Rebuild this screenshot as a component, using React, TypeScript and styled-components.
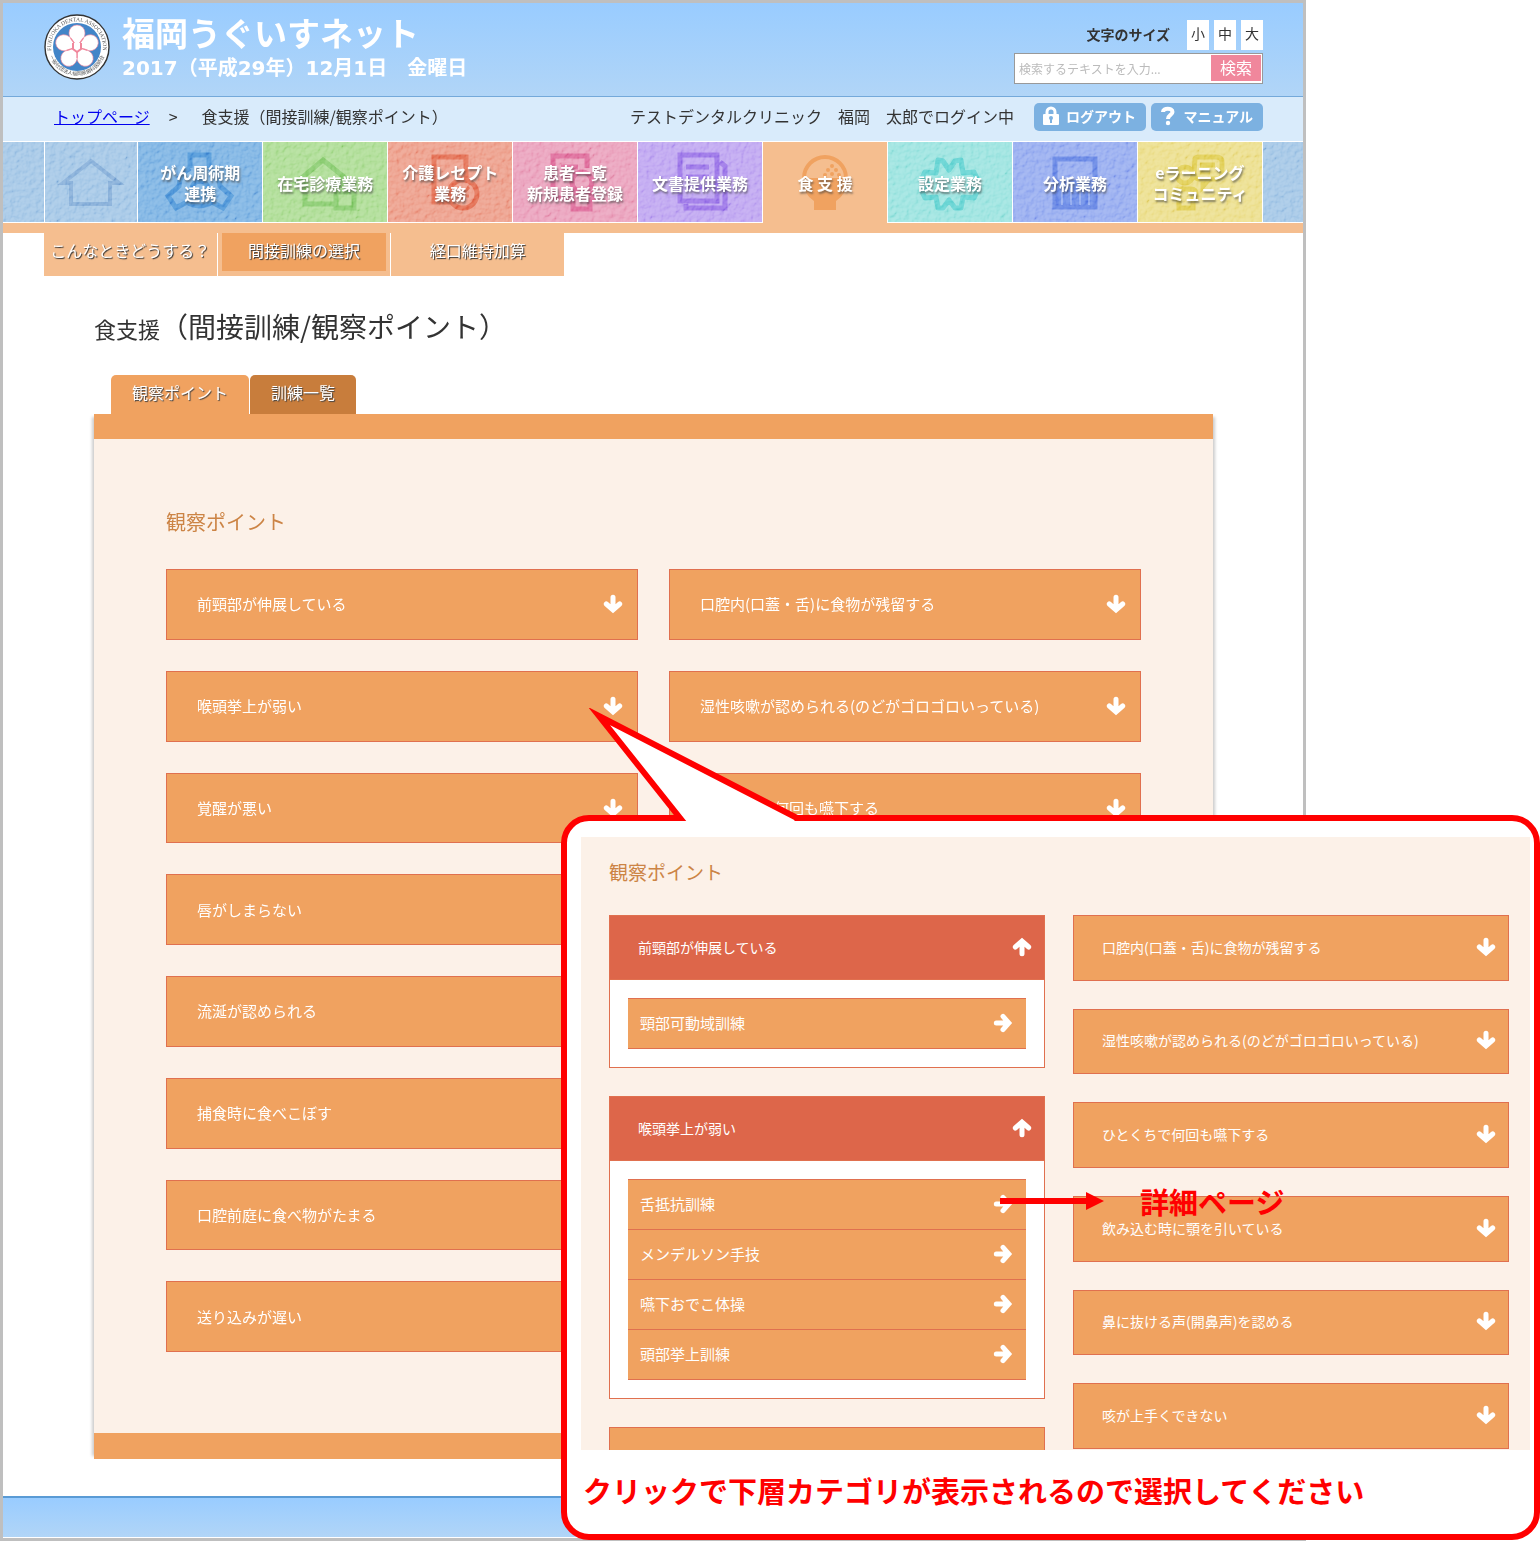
import React, { useState } from 'react';
import styled, { createGlobalStyle, css } from 'styled-components';

const color = {
  orange: '#f0a260',
  orangeLight: '#f5be8f',
  orangeDark: '#c87d3c',
  cream: '#fcf1e8',
  line: '#e0704f',
  open: '#dd664a',
  red: '#ff0000',
  ink: '#333333',
};

const GlobalStyle = createGlobalStyle`
  *, *::before, *::after { box-sizing: border-box; }
  body {
    margin: 0;
    background: #fff;
    color: ${color.ink};
    font-family: 'Noto Sans CJK JP', 'Noto Sans', sans-serif;
    font-size: 16px;
    line-height: 24px;
  }
  button, input { font: inherit; color: inherit; margin: 0; }
  ul { list-style: none; margin: 0; padding: 0; }
  h1, h2, h3, p { margin: 0; font-weight: 400; }
`;

/* ---------- frame ---------- */

const Canvas = styled.div`
  position: relative;
  padding-right: 234px;
`;

const Page = styled.div`
  border: 3px solid #bfbfbf;
  background: #fff;
`;

const Header = styled.header`
  display: flex;
  justify-content: space-between;
  height: 94px;
  padding: 10px 40px 0 41px;
  background: linear-gradient(#99ccff, #b1d5f7);
  border-bottom: 1px solid #74a9da;
`;

const Brand = styled.div`
  display: flex;
  gap: 12px;
  color: #fff;
`;

const LogoSvg = styled.svg`
  width: 66px;
  height: 66px;
  margin-top: 1px;
`;

const SiteName = styled.h1`
  font-size: 33px;
  line-height: 38px;
  font-weight: 700;
`;

const Today = styled.p`
  padding-top: 2px;
  font-family: 'DejaVu Sans', 'Noto Sans CJK JP', sans-serif;
  font-size: 20px;
  line-height: 30px;
  font-weight: 700;
`;

const Tools = styled.div`
  display: flex;
  flex-direction: column;
  align-items: flex-end;
  gap: 3px;
  padding-top: 7px;
`;

const SizePicker = styled.div`
  display: flex;
  align-items: center;
  gap: 5px;
`;

const SizeLabel = styled.span`
  margin-right: 12px;
  padding-bottom: 3px;
  font-size: 14px;
  font-weight: 700;
`;

const SizeButton = styled.button`
  width: 22px;
  height: 30px;
  padding: 0 0 4px;
  border: 0;
  background: #fff;
  font-size: 14px;
  line-height: 26px;
  cursor: pointer;
`;

const SearchForm = styled.form`
  display: flex;
  width: 249px;
  height: 31px;
  padding: 1px;
  border: 1px solid #999;
  background: #fff;
`;

const SearchInput = styled.input`
  flex: 1;
  min-width: 0;
  padding: 0 3px;
  border: 0;
  outline: 0;
  background: transparent;
  font-size: 12px;
  &::placeholder { color: #bbb; opacity: 1; }
`;

const SearchButton = styled.button`
  width: 50px;
  height: 26px;
  padding: 0 0 3px;
  border: 0;
  background: #f0879c;
  color: #fff;
  line-height: 22px;
  cursor: pointer;
`;

const InfoBar = styled.div`
  display: flex;
  align-items: center;
  height: 44px;
  padding: 0 40px 4px 51px;
  background: #d9ebfb;
`;

const Crumbs = styled.nav`
  display: flex;
  gap: 19px;
  padding-bottom: 2px;
  a { color: #0000ee; }
  span:last-child { margin-left: 5px; }
`;

const LoginName = styled.span`
  margin: 0 20px 0 auto;
  padding-bottom: 2px;
`;

const InfoActions = styled.div`
  display: flex;
  gap: 5px;
`;

const InfoButton = styled.button`
  display: flex;
  align-items: center;
  justify-content: space-between;
  width: 112px;
  height: 28px;
  padding: 0 10px 2px 8px;
  border: 0;
  border-radius: 5px;
  background: #7cb1e1;
  color: #fff;
  font-size: 14px;
  font-weight: 700;
  line-height: 24px;
  cursor: pointer;
  svg { width: 18px; height: 20px; }
`;

/* ---------- main navigation ---------- */

const NavBar = styled.nav`
  position: relative;
  display: flex;
  height: 82px;
  border-top: 1px solid #fff;
`;

const Grain = styled.svg`
  position: absolute;
  inset: 0;
  width: 100%;
  height: 80px;
  mix-blend-mode: soft-light;
  opacity: 0.6;
  pointer-events: none;
`;

const NavEdge = styled.span`
  flex: 0 0 41px;
  height: 80px;
  background: #a0c4e5;
  a + & { border-left: 1px solid #fff; }
`;

const NavTile = styled.a<{ $bg: string; $active?: boolean; $narrow?: boolean }>`
  position: relative;
  z-index: ${(p) => (p.$active ? 1 : 'auto')};
  flex: ${(p) => (p.$narrow ? '93 1 0' : '125 1 0')};
  display: flex;
  align-items: center;
  justify-content: center;
  height: ${(p) => (p.$active ? 81 : 80)}px;
  padding-top: 2px;
  border-left: 1px solid #fff;
  background: ${(p) => p.$bg};
  color: #fff;
  font-size: 16px;
  line-height: 21px;
  font-weight: 700;
  text-align: center;
  text-decoration: none;
  white-space: pre-line;
  text-shadow: 1px 2px 2px rgba(60, 60, 60, 0.6);
`;

const TileArt = styled.svg`
  position: absolute;
  top: 0;
  left: 50%;
  width: 125px;
  height: 80px;
  margin-left: -63px;
  fill: none;
  stroke-width: 5;
`;

const TileLabel = styled.span`
  position: relative;
  z-index: 2;
`;

const SubNav = styled.div`
  border-top: 10px solid ${color.orangeLight};
  padding-left: 41px;
`;

const SubList = styled.ul`
  display: flex;
  width: 520px;
`;

const SubItem = styled.li<{ $current?: boolean }>`
  flex: 1;
  height: 43px;
  padding: 0 4px 5px;
  background: ${color.orangeLight};
  & + & { border-left: 1px solid #fff; }
  a {
    display: block;
    height: 38px;
    margin: 0 -4px;
    color: #fff;
    line-height: 34px;
    text-align: center;
    text-decoration: none;
    text-shadow: 1px 1px 1px #333;
    ${(p) => p.$current && css`margin: 0; background: ${color.orange};`}
  }
`;

/* ---------- content ---------- */

const Content = styled.main`
  padding: 30px 90px 37px 91px;
`;

const PageTitle = styled.h2`
  font-size: 28px;
  line-height: 40px;
  small { font-size: 22px; }
`;

const Tabs = styled.div`
  display: flex;
  gap: 1px;
  padding: 27px 16px 0 17px;
`;

const Tab = styled.button<{ $current?: boolean }>`
  height: 39px;
  padding: 0 21px 5px;
  border: 0;
  border-radius: 5px 5px 0 0;
  background: ${(p) => (p.$current ? color.orange : color.orangeDark)};
  color: #fff;
  line-height: 34px;
  text-shadow: 1px 1px 1px #444;
  cursor: pointer;
`;

const Panel = styled.section`
  padding: 68px 72px 81px;
  border-top: 25px solid ${color.orange};
  border-bottom: 26px solid ${color.orange};
  background: ${color.cream};
  box-shadow: 5px 0 3px -3px #ccc, -5px 0 3px -3px #ccc;
`;

const SectionTitle = styled.h3<{ $small?: boolean }>`
  color: #cc8445;
  font-size: ${(p) => (p.$small ? 19 : 20)}px;
  line-height: 30px;
`;

const PointGrid = styled.ul`
  display: grid;
  grid-template-columns: 1fr 1fr;
  grid-template-rows: repeat(8, 1fr);
  gap: 31px;
  min-height: 783px;
  margin-top: 32px;
`;

const PointCell = styled.li<{ $column: number }>`
  display: grid;
  grid-column: ${(p) => p.$column};
`;

const PointButton = styled.button<{ $compact?: boolean; $open?: boolean }>`
  display: flex;
  align-items: center;
  justify-content: space-between;
  width: 100%;
  min-height: ${(p) => (p.$compact ? 65 : 70)}px;
  padding: ${(p) => (p.$compact ? '0 12px 2px 28px' : '0 14px 0 30px')};
  border: 1px solid ${color.line};
  background: ${(p) => (p.$open ? color.open : color.orange)};
  color: #fff;
  font-size: ${(p) => (p.$compact ? 14 : 15)}px;
  text-align: left;
  cursor: pointer;
`;

const ArrowSvg = styled.svg<{ $turn: number }>`
  flex: none;
  width: 20px;
  height: 20px;
  fill: none;
  stroke: #fff;
  stroke-width: 6;
  stroke-linecap: round;
  transform: rotate(${(p) => p.$turn}deg);
`;

const Footer = styled.footer`
  height: 41px;
  margin-bottom: 1px;
  border-top: 2px solid #5a9bd5;
  background: linear-gradient(#99ccff, #b1d5f7);
`;

/* ---------- callout over the page ---------- */

const Callout = styled.aside`
  position: absolute;
  top: 815px;
  right: 0;
  bottom: 1px;
  left: 561px;
  display: flex;
  flex-direction: column;
  padding: 16px 4px 0 14px;
  border: 6px solid ${color.red};
  border-radius: 28px;
  background: #fff;
`;

const Tail = styled.svg`
  position: absolute;
  top: -113px;
  left: 20px;
  width: 220px;
  height: 120px;
`;

const Inset = styled.div`
  position: relative;
  flex: 1;
  min-height: 0;
  overflow: hidden;
  padding: 20px 21px 0 28px;
  background: ${color.cream};
`;

const InsetColumns = styled.div`
  display: grid;
  grid-template-columns: 1fr 1fr;
  align-items: start;
  gap: 28px;
  margin-top: 28px;
`;

const OpenList = styled.ul`
  display: grid;
  gap: 28px;
`;

const ClosedList = styled.ul`
  display: grid;
  grid-auto-rows: 1fr;
  gap: 28px;
  min-height: 534px;
  li { display: grid; }
`;

const SubPoints = styled.ul`
  padding: 18px;
  border: 1px solid ${color.line};
  border-top: 0;
  background: #fff;
  li:first-child { border-top: 1px solid ${color.line}; }
`;

const SubPoint = styled.a`
  display: flex;
  align-items: center;
  justify-content: space-between;
  height: 50px;
  padding: 0 13px 2px 12px;
  border-bottom: 1px solid ${color.line};
  background: ${color.orange};
  color: #fff;
  font-size: 15px;
  text-decoration: none;
`;

const Note = styled.p`
  padding: 20px 0 24px 2px;
  color: ${color.red};
  font-size: 29px;
  line-height: 40px;
  font-weight: 700;
`;

const Pointer = styled.div`
  position: absolute;
  top: 344px;
  left: 419px;
  display: flex;
  align-items: center;
  gap: 36px;
  color: ${color.red};
  font-size: 29px;
  line-height: 40px;
  font-weight: 700;
  pointer-events: none;
  svg { width: 104px; height: 20px; }
`;

/* ---------- drawings ---------- */

const petals = [0, 72, 144, 216, 288];

const Logo = () => (
  <LogoSvg viewBox="0 0 66 66" aria-hidden="true">
    <defs>
      <path id="ringTop" d="M8.5 42 A26 26 0 1 1 57.5 42" />
      <path id="ringBottom" d="M5 40 A29 29 0 0 0 61 40" />
    </defs>
    <circle cx="33" cy="33" r="32" fill="#fff" stroke="#333" strokeWidth="1.4" />
    <circle cx="33" cy="33" r="24" fill="#4285c8" />
    <g fill="#555" fontFamily="Liberation Serif, serif" fontSize="5.6">
      <text><textPath href="#ringTop" startOffset="50%" textAnchor="middle">FUKUOKA DENTAL ASSOCIATION</textPath></text>
      <text fontFamily="Noto Sans CJK JP, sans-serif" fontSize="5">
        <textPath href="#ringBottom" startOffset="50%" textAnchor="middle">一般社団法人福岡県歯科医師会</textPath>
      </text>
    </g>
    <circle cx="33" cy="33" r="10" fill="#f0879c" />
    {petals.map((a) => (
      <path
        key={a}
        d="M33 31 C29 29 25 24 25 19 A8 8 0 0 1 41 19 C41 24 37 29 33 31 Z"
        fill="#fff"
        stroke="#f0879c"
        strokeWidth="0.6"
        transform={`rotate(${a} 33 33)`}
      />
    ))}
    {petals.map((a) => (
      <path key={a} d="M33 33 L33 22" stroke="#f0879c" strokeWidth="1.2" transform={`rotate(${a + 36} 33 33)`} />
    ))}
    <path d="M29 29 V35 L33 38 L37 35 V29" fill="#fff" stroke="#f0879c" strokeWidth="2" />
  </LogoSvg>
);

const Lock = () => (
  <svg viewBox="0 0 18 20" aria-hidden="true">
    <path d="M5 9 V6 a4 4 0 0 1 8 0 V9" fill="none" stroke="#fff" strokeWidth="3" />
    <rect x="1" y="8" width="16" height="11" rx="1" fill="#fff" />
    <circle cx="9" cy="12" r="2" fill="#7cb1e1" />
    <path d="M9 13 V17" stroke="#7cb1e1" strokeWidth="2" />
  </svg>
);

const Question = () => (
  <svg viewBox="0 0 18 20" aria-hidden="true">
    <path d="M4 6 C4 1.5 13.5 1.5 13.5 6 C13.5 9 9 9 9 13" fill="none" stroke="#fff" strokeWidth="4" />
    <circle cx="9" cy="17" r="2.2" fill="#fff" />
  </svg>
);

const Arrow = ({ turn = 0 }: { turn?: number }) => (
  <ArrowSvg $turn={turn} viewBox="0 0 24 24" aria-hidden="true">
    <path d="M12 4 V17 M4 12 L12 19 L20 12" />
  </ArrowSvg>
);

const art: Record<string, React.ReactNode> = {
  home: <path d="M45 41 H35 L63 19 L91 41 H82 V62 H43 V41" strokeWidth="4" />,
  cancer: (
    <path d="M53 26 V13 H72 V26 M72 26 A22 22 0 0 1 83 44 L94 54 L86 66 L75 60 A22 22 0 0 1 50 60 L39 66 L31 54 L42 44 A22 22 0 0 1 53 26 M55 47 a8 8 0 1 0 16 0 a8 8 0 1 0 -16 0" />
  ),
  visit: <path d="M43 39 H36 L61 18 L87 39 H80 V46 M43 39 V62 H72 M74 50 H92 V66 H74 Z" />,
  care: (
    <>
      <path d="M64 60 H47 V15 H79 V38" />
      <circle cx="76" cy="52" r="14" />
      <path d="M70 45 L76 52 L82 45 M76 52 V60 M70 54 H82" strokeWidth="3" />
    </>
  ),
  patient: (
    <>
      <path d="M56 56 H41 V14 H75 V26 M49 25 H66 M49 34 H58" />
      <circle cx="70" cy="40" r="10" />
      <path d="M58 56 Q58 51 64 51 H76 Q82 51 82 56 L78 58 V67 H61 V58 Z" />
    </>
  ),
  document: (
    <path d="M43 13 H80 V59 H43 Z M83 20 L88 24 V66 H49 V62 M49 25 H72 M49 35 H72 M49 45 H72" />
  ),
  food: (
    <g fill="#f0a260" stroke="none">
      <path d="M42 44 V36 A20 20 0 0 1 84 36 V44" fill="none" stroke="#f0a260" strokeWidth="4" />
      <path d="M40 36 H86 Q85 52 74 59 V68 H52 V59 Q41 52 40 36 Z" />
      <circle cx="70" cy="24" r="2" /><circle cx="66" cy="28" r="2" />
      <circle cx="74" cy="28" r="2" /><circle cx="70" cy="32" r="2" />
      <circle cx="63" cy="33" r="2" /><circle cx="77" cy="33" r="2" />
    </g>
  ),
  settings: (
    <path
      d="M51 18 L56 19 L62 28 L68 19 L74 18 L76 31 L87 30 L90 36 L82 43 L90 50 L87 56 L76 55 L74 66 L68 66 L62 58 L56 66 L51 66 L49 55 L38 56 L35 50 L43 43 L35 36 L38 30 L49 31 Z"
      strokeLinejoin="round"
    />
  ),
  analysis: (
    <>
      <path d="M43 38 H85 V67 H43 Z" fill="#6687e6" stroke="none" />
      <path d="M43 17 H83 V65 H43 Z" />
      <path d="M50 46 V63 M59 46 V63 M68 46 V63 M77 46 V63" stroke="#8fa8ee" strokeWidth="2" />
    </>
  ),
  learning: (
    <>
      <path d="M58 17 Q58 15 63 15 H79 Q85 15 85 20 V31 Q85 37 79 37 H72 L66 44 V37 H63 Q57 37 57 31 Z M63 23 H78 M63 30 H73" />
      <circle cx="48" cy="33" r="8" />
      <path d="M38 52 Q38 47 44 47 H54 Q59 47 59 52 V56 H56 V66 H42 V56 H38 Z" />
    </>
  ),
};

/* ---------- data ---------- */

const tiles = [
  { art: 'home', label: '', bg: '#a0c4e5', ink: '#7fa9d6' },
  { art: 'cancer', label: 'がん周術期\n連携', bg: '#79b0e2', ink: '#4991d6' },
  { art: 'visit', label: '在宅診療業務', bg: '#aadb91', ink: '#84c96a' },
  { art: 'care', label: '介護レセプト\n業務', bg: '#ec9b87', ink: '#e2694d' },
  { art: 'patient', label: '患者一覧\n新規患者登録', bg: '#e99db9', ink: '#dc6494' },
  { art: 'document', label: '文書提供業務', bg: '#bca2f0', ink: '#956ee6' },
  { art: 'food', label: '食 支 援', bg: color.orangeLight, ink: color.orange, active: true },
  { art: 'settings', label: '設定業務', bg: '#98e2de', ink: '#5dd0cf' },
  { art: 'analysis', label: '分析業務', bg: '#93a9ef', ink: '#6080e3' },
  { art: 'learning', label: 'eラーニング\nコミュニティ', bg: '#ebdd89', ink: '#dfcb4e' },
];

const leftPoints = [
  '前頸部が伸展している',
  '喉頭挙上が弱い',
  '覚醒が悪い',
  '唇がしまらない',
  '流涎が認められる',
  '捕食時に食べこぼす',
  '口腔前庭に食べ物がたまる',
  '送り込みが遅い',
];

const rightPoints = [
  '口腔内(口蓋・舌)に食物が残留する',
  '湿性咳嗽が認められる(のどがゴロゴロいっている)',
  'ひとくちで何回も嚥下する',
  '飲み込む時に顎を引いている',
  '鼻に抜ける声(開鼻声)を認める',
  '咳が上手くできない',
];

const groups = [
  { title: leftPoints[0], items: ['頸部可動域訓練'] },
  { title: leftPoints[1], items: ['舌抵抗訓練', 'メンデルソン手技', '嚥下おでこ体操', '頭部挙上訓練'] },
];

const pageRightPoints = rightPoints.slice(0, 3);

function Group({ title, items }: { title: string; items: string[] }) {
  const [open, setOpen] = useState(true);
  return (
    <li>
      <PointButton $compact $open={open} aria-expanded={open} onClick={() => setOpen(!open)}>
        {title}
        <Arrow turn={open ? 180 : 0} />
      </PointButton>
      {open && (
        <SubPoints>
          {items.map((item) => (
            <li key={item}>
              <SubPoint href="#detail">
                {item}
                <Arrow turn={-90} />
              </SubPoint>
            </li>
          ))}
        </SubPoints>
      )}
    </li>
  );
}

export default function App() {
  return (
    <Canvas>
      <GlobalStyle />
      <Page>
        <Header>
          <Brand>
            <Logo />
            <div>
              <SiteName>福岡うぐいすネット</SiteName>
              <Today>2017（平成29年）12月1日　金曜日</Today>
            </div>
          </Brand>
          <Tools>
            <SizePicker>
              <SizeLabel>文字のサイズ</SizeLabel>
              <SizeButton>小</SizeButton>
              <SizeButton>中</SizeButton>
              <SizeButton>大</SizeButton>
            </SizePicker>
            <SearchForm role="search" onSubmit={(e) => e.preventDefault()}>
              <SearchInput aria-label="検索" placeholder="検索するテキストを入力..." />
              <SearchButton>検索</SearchButton>
            </SearchForm>
          </Tools>
        </Header>

        <InfoBar>
          <Crumbs>
            <a href="#top">トップページ</a>
            <span>&gt;</span>
            <span>食支援（間接訓練/観察ポイント）</span>
          </Crumbs>
          <LoginName>テストデンタルクリニック　福岡　太郎でログイン中</LoginName>
          <InfoActions>
            <InfoButton><Lock />ログアウト</InfoButton>
            <InfoButton><Question />マニュアル</InfoButton>
          </InfoActions>
        </InfoBar>

        <NavBar>
          <NavEdge />
          {tiles.map((t) => (
            <NavTile
              key={t.art}
              href={`#${t.art}`}
              aria-label={t.label ? undefined : 'トップページ'}
              $bg={t.bg}
              $active={t.active}
              $narrow={t.art === 'home'}
            >
              <TileArt viewBox="0 0 125 80" stroke={t.ink} aria-hidden="true">{art[t.art]}</TileArt>
              {t.label && <TileLabel>{t.label}</TileLabel>}
            </NavTile>
          ))}
          <NavEdge />
          <Grain aria-hidden="true">
            <filter id="paper" x="0" y="0" width="100%" height="100%">
              <feTurbulence type="fractalNoise" baseFrequency="0.2" numOctaves="3" seed="4" />
              <feDiffuseLighting lightingColor="#fff" surfaceScale="2.5" diffuseConstant="0.75">
                <feDistantLight azimuth="225" elevation="45" />
              </feDiffuseLighting>
            </filter>
            <rect width="100%" height="100%" filter="url(#paper)" />
          </Grain>
        </NavBar>

        <SubNav>
          <SubList>
            <SubItem><a href="#help">こんなときどうする？</a></SubItem>
            <SubItem $current><a href="#training">間接訓練の選択</a></SubItem>
            <SubItem><a href="#oral">経口維持加算</a></SubItem>
          </SubList>
        </SubNav>

        <Content>
          <PageTitle><small>食支援</small>（間接訓練/観察ポイント）</PageTitle>
          <Tabs role="tablist">
            <Tab role="tab" aria-selected="true" $current>観察ポイント</Tab>
            <Tab role="tab" aria-selected="false">訓練一覧</Tab>
          </Tabs>
          <Panel>
            <SectionTitle>観察ポイント</SectionTitle>
            <PointGrid>
              {leftPoints.map((left, i) => (
                <React.Fragment key={left}>
                  <PointCell $column={1}>
                    <PointButton>{left}<Arrow /></PointButton>
                  </PointCell>
                  {pageRightPoints[i] && (
                    <PointCell $column={2}>
                      <PointButton>{pageRightPoints[i]}<Arrow /></PointButton>
                    </PointCell>
                  )}
                </React.Fragment>
              ))}
            </PointGrid>
          </Panel>
        </Content>
        <Footer />
      </Page>

      <Callout>
        <Tail viewBox="0 0 220 120" aria-hidden="true">
          <path d="M94 110 L12 8 L206 110 L212 120 H88 Z" fill="#fff" />
          <path d="M72 110 H93 L12 8 L210 110 H220" fill="none" stroke={color.red} strokeWidth="6" strokeMiterlimit="10" />
        </Tail>
        <Inset>
          <SectionTitle $small>観察ポイント</SectionTitle>
          <InsetColumns>
            <OpenList>
              {groups.map((g) => <Group key={g.title} {...g} />)}
              <li><PointButton $compact aria-label={leftPoints[2]} /></li>
            </OpenList>
            <ClosedList>
              {rightPoints.map((p) => (
                <li key={p}><PointButton $compact>{p}<Arrow /></PointButton></li>
              ))}
            </ClosedList>
          </InsetColumns>
          <Pointer>
            <svg viewBox="0 0 104 20" aria-hidden="true">
              <path d="M0 7 H86 V1 L104 10 L86 19 V13 H0 Z" fill={color.red} />
            </svg>
            詳細ページ
          </Pointer>
        </Inset>
        <Note>クリックで下層カテゴリが表示されるので選択してください</Note>
      </Callout>
    </Canvas>
  );
}
